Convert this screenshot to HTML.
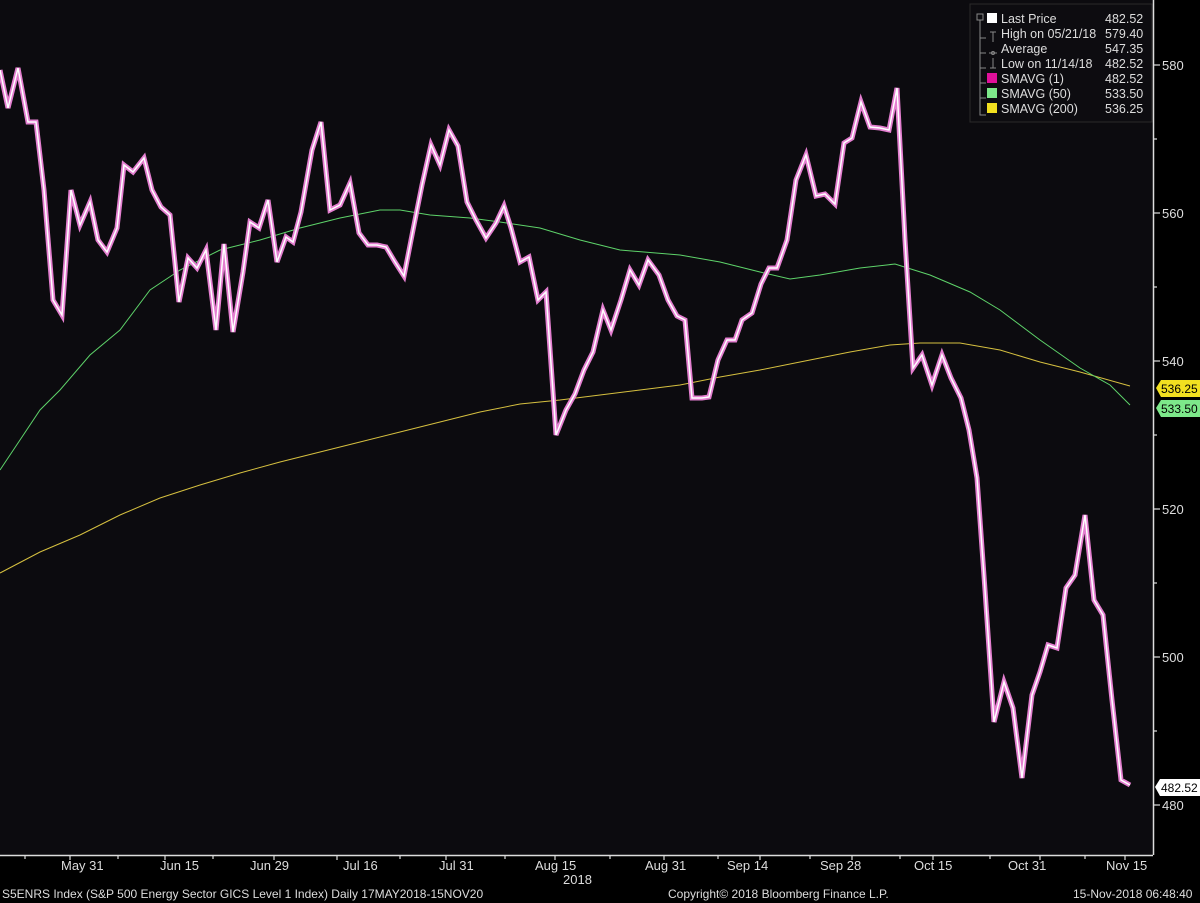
<!DOCTYPE html>
<html><head><meta charset="utf-8"><style>
html,body{margin:0;padding:0;background:#000;width:1200px;height:903px;overflow:hidden;font-family:"Liberation Sans",sans-serif}
</style></head><body>
<svg width="1200" height="903" xmlns="http://www.w3.org/2000/svg" font-family="Liberation Sans, sans-serif">
<rect width="1200" height="903" fill="#000"/>
<rect x="0" y="0" width="1153" height="855" fill="#0c0b0f"/>
<line x1="1153.5" y1="0" x2="1153.5" y2="855" stroke="#ddd" stroke-width="1.5"/>
<line x1="0" y1="855.5" x2="1153" y2="855.5" stroke="#ddd" stroke-width="1.5"/>
<g stroke="#ddd" stroke-width="1.2">
<line x1="1153" y1="65" x2="1160" y2="65"/><line x1="1153" y1="213" x2="1160" y2="213"/><line x1="1153" y1="361" x2="1160" y2="361"/><line x1="1153" y1="509" x2="1160" y2="509"/><line x1="1153" y1="657" x2="1160" y2="657"/><line x1="1153" y1="805" x2="1160" y2="805"/>
<line x1="1153" y1="139" x2="1157" y2="139"/><line x1="1153" y1="287" x2="1157" y2="287"/><line x1="1153" y1="435" x2="1157" y2="435"/><line x1="1153" y1="583" x2="1157" y2="583"/><line x1="1153" y1="731" x2="1157" y2="731"/>
<line x1="25" y1="855" x2="25" y2="859"/><line x1="70" y1="855" x2="70" y2="860"/><line x1="118" y1="855" x2="118" y2="859"/><line x1="165" y1="855" x2="165" y2="860"/><line x1="213" y1="855" x2="213" y2="859"/><line x1="274" y1="855" x2="274" y2="860"/><line x1="337" y1="855" x2="337" y2="860"/><line x1="400" y1="855" x2="400" y2="859"/><line x1="446" y1="855" x2="446" y2="860"/><line x1="505" y1="855" x2="505" y2="859"/><line x1="555" y1="855" x2="555" y2="860"/><line x1="610" y1="855" x2="610" y2="859"/><line x1="664" y1="855" x2="664" y2="860"/><line x1="718" y1="855" x2="718" y2="859"/><line x1="760" y1="855" x2="760" y2="860"/><line x1="810" y1="855" x2="810" y2="859"/><line x1="852" y1="855" x2="852" y2="860"/><line x1="900" y1="855" x2="900" y2="859"/><line x1="933" y1="855" x2="933" y2="860"/><line x1="990" y1="855" x2="990" y2="859"/><line x1="1040" y1="855" x2="1040" y2="860"/><line x1="1085" y1="855" x2="1085" y2="859"/><line x1="1125" y1="855" x2="1125" y2="860"/>
</g>
<g fill="#ddd" font-size="13">
<text x="1162" y="70">580</text><text x="1162" y="218">560</text><text x="1162" y="366">540</text><text x="1162" y="514">520</text><text x="1162" y="662">500</text><text x="1162" y="810">480</text>
<text x="61" y="870">May 31</text><text x="160" y="870">Jun 15</text><text x="250" y="870">Jun 29</text><text x="343" y="870">Jul 16</text><text x="439" y="870">Jul 31</text><text x="535" y="870">Aug 15</text><text x="563" y="884">2018</text><text x="645" y="870">Aug 31</text><text x="727" y="870">Sep 14</text><text x="820" y="870">Sep 28</text><text x="914" y="870">Oct 15</text><text x="1008" y="870">Oct 31</text><text x="1106" y="870">Nov 15</text>
<text x="2" y="898" font-size="12">S5ENRS Index (S&amp;P 500 Energy Sector GICS Level 1 Index)  Daily 17MAY2018-15NOV20</text>
<text x="668" y="898" font-size="12">Copyright© 2018 Bloomberg Finance L.P.</text>
<text x="1073" y="898" font-size="12">15-Nov-2018 06:48:40</text>
</g>
<polyline fill="none" stroke="#d6c040" stroke-width="1" points="0,573 40,552 80,535 120,515 160,498 200,485 240,473 280,462 320,452 360,442 400,432 440,422 480,412 520,404 560,400 600,395 640,390 680,385 720,377 760,370 800,362 850,352 890,345 920,343 960,343 1000,350 1040,362 1080,372 1130,386"/>
<polyline fill="none" stroke="#5ed36a" stroke-width="1" points="0,470 20,440 40,410 60,390 90,355 120,330 150,290 180,270 220,250 260,240 300,228 340,218 380,210 400,210 430,215 470,218 500,222 540,228 580,240 620,250 680,255 720,262 760,272 790,279 820,275 860,268 895,264 930,275 970,292 1000,310 1040,340 1080,368 1110,385 1130,405"/>
<polyline fill="none" stroke="#e47fd0" stroke-width="5" points="0,70 8,108 18,68 28,122 36,122 44,190 53,300 62,315 71,190 80,225 90,202 98,240 107,252 117,228 124,165 133,172 144,158 152,190 161,207 170,215 179,302 188,258 197,268 206,250 216,330 224,244 233,332 243,272 250,222 259,228 268,200 277,262 286,237 293,242 301,212 312,150 321,122 330,210 340,205 350,183 359,233 368,245 377,245 386,247 395,262 404,276 413,230 422,185 431,145 440,165 449,130 458,146 467,202 476,220 486,238 496,223 504,206 511,228 520,262 529,257 538,300 546,292 556,435 566,410 575,394 584,370 593,352 603,310 611,330 621,300 630,270 639,285 648,260 659,275 668,300 677,316 685,320 692,398 702,398 709,397 718,360 727,340 735,340 742,320 752,313 761,284 769,268 777,268 787,240 796,180 806,155 816,196 825,194 835,204 844,143 852,138 861,102 870,127 880,128 889,130 897,88 905,240 913,368 922,355 932,385 942,355 951,378 961,398 969,430 977,478 985,590 994,722 1004,682 1013,708 1022,778 1032,695 1040,672 1048,645 1057,648 1066,588 1075,575 1085,515 1094,600 1103,615 1112,700 1121,780 1130,785"/>
<polyline fill="none" stroke="#fff" stroke-width="1.5" points="0,70 8,108 18,68 28,122 36,122 44,190 53,300 62,315 71,190 80,225 90,202 98,240 107,252 117,228 124,165 133,172 144,158 152,190 161,207 170,215 179,302 188,258 197,268 206,250 216,330 224,244 233,332 243,272 250,222 259,228 268,200 277,262 286,237 293,242 301,212 312,150 321,122 330,210 340,205 350,183 359,233 368,245 377,245 386,247 395,262 404,276 413,230 422,185 431,145 440,165 449,130 458,146 467,202 476,220 486,238 496,223 504,206 511,228 520,262 529,257 538,300 546,292 556,435 566,410 575,394 584,370 593,352 603,310 611,330 621,300 630,270 639,285 648,260 659,275 668,300 677,316 685,320 692,398 702,398 709,397 718,360 727,340 735,340 742,320 752,313 761,284 769,268 777,268 787,240 796,180 806,155 816,196 825,194 835,204 844,143 852,138 861,102 870,127 880,128 889,130 897,88 905,240 913,368 922,355 932,385 942,355 951,378 961,398 969,430 977,478 985,590 994,722 1004,682 1013,708 1022,778 1032,695 1040,672 1048,645 1057,648 1066,588 1075,575 1085,515 1094,600 1103,615 1112,700 1121,780 1130,785"/>
<rect x="970" y="4" width="182" height="118" fill="#0d0c10" stroke="#2a2a2a"/>
<g stroke="#888" fill="none" stroke-width="1">
<rect x="977" y="14" width="6" height="6"/><path d="M980,20 V115 H986 M980,38 H986 M980,53 H986 M980,68 H986 M980,83 H986 M980,98 H986"/>
<path d="M990,32 H996 M993,32 V42"/><path d="M989,53 H997"/><circle cx="993" cy="53" r="1.5"/><path d="M993,58 V68 M990,68 H996"/>
</g>
<g fill="#ddd" font-size="12.5">
<rect x="987" y="13" width="10" height="10" fill="#fff"/><text x="1001" y="23">Last Price</text><text x="1105" y="23">482.52</text>
<text x="1001" y="38">High on 05/21/18</text><text x="1105" y="38">579.40</text>
<text x="1001" y="53">Average</text><text x="1105" y="53">547.35</text>
<text x="1001" y="68">Low on 11/14/18</text><text x="1105" y="68">482.52</text>
<rect x="987" y="73" width="10" height="10" fill="#e0109a"/><text x="1001" y="83">SMAVG (1)</text><text x="1105" y="83">482.52</text>
<rect x="987" y="88" width="10" height="10" fill="#7de88a"/><text x="1001" y="98">SMAVG (50)</text><text x="1105" y="98">533.50</text>
<rect x="987" y="103" width="10" height="10" fill="#f2e020"/><text x="1001" y="113">SMAVG (200)</text><text x="1105" y="113">536.25</text>
</g>
<path d="M1156,388 L1161,380 L1200,380 L1200,397 L1161,397 Z" fill="#f2e020"/>
<text x="1161" y="393" font-size="12" fill="#000">536.25</text>
<path d="M1156,408 L1161,400 L1200,400 L1200,417 L1161,417 Z" fill="#7de88a"/>
<text x="1161" y="413" font-size="12" fill="#000">533.50</text>
<path d="M1155,787 L1160,779 L1200,779 L1200,796 L1160,796 Z" fill="#fff"/>
<text x="1161" y="792" font-size="12" fill="#000">482.52</text>
</svg>
</body></html>
